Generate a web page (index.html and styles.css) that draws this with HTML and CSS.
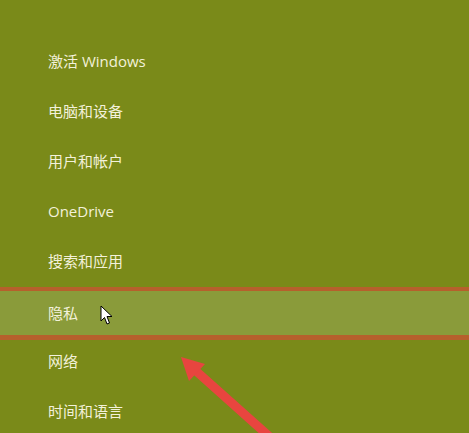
FILE: index.html
```html
<!DOCTYPE html>
<html>
<head>
	<meta charset="utf-8">
	<title>设置</title>
	<link rel="stylesheet" href="styles.css">
</head>
<body>
	<div class="panel">
		<ul class="menu">
			<li class="item">激活 Windows</li>
			<li class="item">电脑和设备</li>
			<li class="item">用户和帐户</li>
			<li class="item">OneDrive</li>
			<li class="item">搜索和应用</li>
			<li class="item selected">隐私
				<svg class="cursor" width="13" height="21" viewBox="0 0 13 21">
					<path d="M1 1 L1 16 L4.5 12.5 L7 19 L9.5 18 L7 11.5 L12 11.5 Z" fill="#fff" stroke="#000" stroke-width="1" stroke-linejoin="round"/>
				</svg>
			</li>
			<li class="item">网络</li>
			<li class="item">时间和语言</li>
		</ul>
		<!-- red arrow drawn over the list -->
		<svg class="pointer" width="469" height="433" viewBox="0 0 469 433">
			<line x1="196" y1="371" x2="290" y2="455" stroke="#e8453f" stroke-width="9" stroke-linecap="round"/>
			<polygon points="181,357 205,364 189,381" fill="#e8453f"/>
		</svg>
	</div>
</body>
</html>
```
FILE: styles.css
```css
body{
	margin: 0;
	background-color: #7a8a19;
	font-family: "Segoe UI", "Open Sans", "Noto Sans CJK SC", sans-serif;
	overflow: hidden;
}
.panel{
	position: relative;
	width: 469px;
	height: 433px;
}
.menu{
	list-style: none;
	margin: 0;
	padding: 37px 0 0 0;
}
.item{
	display: flex;
	align-items: center;
	height: 50px;
	padding: 0 0 3px 48px;
	font-size: 15px;
	color: #f3f1da;
	box-sizing: border-box;
}
.selected{
	position: relative;
	height: 53px;
	margin-bottom: -3px;
	padding-bottom: 1px;
	background-color: #8a9b3a;
	border-top: 4px solid #b6602c;
	border-bottom: 5px solid #b6602c;
}
.cursor{
	position: absolute;
	left: 100px;
	top: 14px;
}
.pointer{
	position: absolute;
	left: 0;
	top: 0;
}
```
